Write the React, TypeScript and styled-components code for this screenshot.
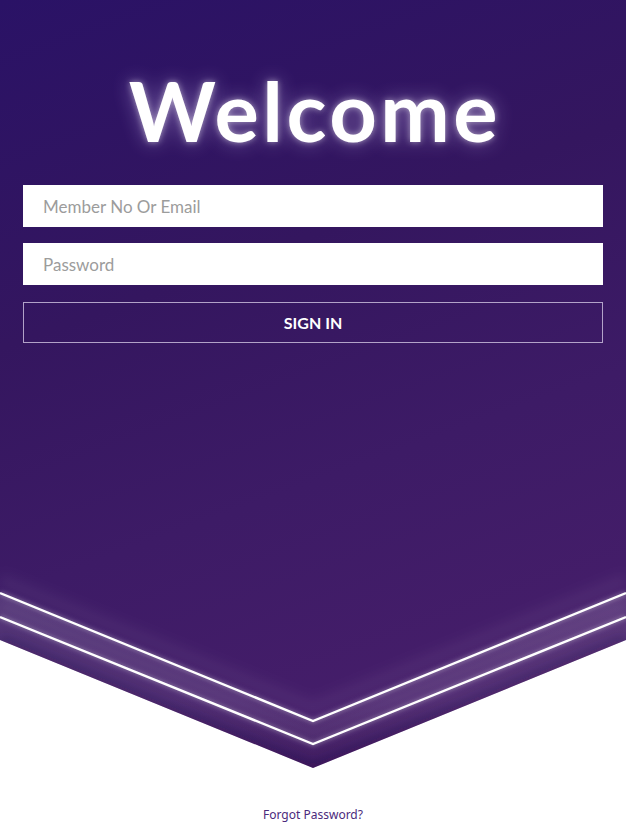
import React from "react";
import styled, { createGlobalStyle } from "styled-components";

const Global = createGlobalStyle`
  html, body { margin: 0; padding: 0; background: #ffffff; }
  * { box-sizing: border-box; }
`;

const Page = styled.div`
  width: 626px;
  min-height: 835px;
  background: #ffffff;
  display: flex;
  flex-direction: column;
`;

const Hero = styled.section`
  position: relative;
  height: 768px;
  background: linear-gradient(160deg, #2a1266 0%, #34165f 35%, #3d1b66 60%, #4a1f6c 100%);
  clip-path: polygon(0 0, 100% 0, 100% 640px, 50% 768px, 0 640px);
  padding: 70px 23px 0;
  display: flex;
  flex-direction: column;
`;

const Title = styled.h1`
  margin: 0;
  padding-left: 4px;
  font-family: "Lato", "Noto Sans", sans-serif;
  font-weight: 700;
  font-size: 83px;
  line-height: 80px;
  color: #ffffff;
  text-align: center;
  letter-spacing: 3.5px;
  text-shadow: 0 0 6px rgba(255, 255, 255, 0.5), 0 0 20px rgba(220, 200, 255, 0.45);
`;

const Form = styled.form`
  margin-top: 35px;
  display: flex;
  flex-direction: column;
  gap: 16px;
  position: relative;
  z-index: 2;
`;

const Field = styled.input`
  width: 100%;
  height: 42px;
  border: none;
  outline: none;
  background: #ffffff;
  padding: 0 20px;
  font-family: "Lato", "Noto Sans", sans-serif;
  font-size: 17px;
  color: #333;
  &::placeholder { color: #9c9c9c; }
`;

const SignIn = styled.button`
  height: 41px;
  margin-top: 1px;
  background: transparent;
  border: 1px solid rgba(220, 210, 235, 0.75);
  color: #ffffff;
  font-family: "Lato", "Noto Sans", sans-serif;
  font-weight: 700;
  font-size: 16px;
  cursor: pointer;
`;

const Bevel = styled.svg`
  position: absolute;
  left: 0;
  top: 0;
  width: 626px;
  height: 768px;
  pointer-events: none;
`;

const Footer = styled.div`
  display: flex;
  justify-content: center;
  padding-top: 38px;
`;

const ForgotLink = styled.a`
  font-family: "Noto Sans", "Open Sans", sans-serif;
  font-size: 12px;
  color: #4b2a7c;
  text-decoration: none;
`;

export default function App() {
  return (
    <Page>
      <Global />
      <Hero>
        <Bevel viewBox="0 0 626 768">
          <defs>
            <linearGradient id="band" x1="0" y1="0" x2="0" y2="1">
              <stop offset="0" stopColor="#ffffff" stopOpacity="0.12" />
              <stop offset="0.6" stopColor="#ffffff" stopOpacity="0.08" />
              <stop offset="1" stopColor="#000000" stopOpacity="0.08" />
            </linearGradient>
            <filter id="glow" x="-10%" y="-50%" width="120%" height="200%">
              <feGaussianBlur stdDeviation="2" />
            </filter>
            <filter id="soft" x="-10%" y="-50%" width="120%" height="200%">
              <feGaussianBlur stdDeviation="6" />
            </filter>
          </defs>
          <polygon points="0,593 313,721 626,593 626,640 313,768 0,640" fill="url(#band)" />
          <polyline points="0,605 313,733 626,605" fill="none" stroke="#ffffff" strokeOpacity="0.06" strokeWidth="14" filter="url(#soft)" />
          <polyline points="0,580 313,708 626,580" fill="none" stroke="#ffffff" strokeOpacity="0.05" strokeWidth="14" filter="url(#soft)" />
          <polyline points="0,640 313,768 626,640" fill="none" stroke="#1e0a40" strokeOpacity="0.35" strokeWidth="8" filter="url(#soft)" />
          <polyline points="0,593 313,721 626,593" fill="none" stroke="#ffffff" strokeOpacity="0.3" strokeWidth="4" filter="url(#glow)" />
          <polyline points="0,617 313,744 626,617" fill="none" stroke="#ffffff" strokeOpacity="0.3" strokeWidth="4" filter="url(#glow)" />
          <polyline points="0,593 313,721 626,593" fill="none" stroke="#ffffff" strokeWidth="2.4" />
          <polyline points="0,617 313,744 626,617" fill="none" stroke="#ffffff" strokeWidth="2.4" />
        </Bevel>
        <Title>Welcome</Title>
        <Form onSubmit={(e) => e.preventDefault()}>
          <Field type="text" placeholder="Member No Or Email" />
          <Field type="password" placeholder="Password" />
          <SignIn type="submit">SIGN IN</SignIn>
        </Form>
      </Hero>
      <Footer>
        <ForgotLink href="#">Forgot Password?</ForgotLink>
      </Footer>
    </Page>
  );
}
